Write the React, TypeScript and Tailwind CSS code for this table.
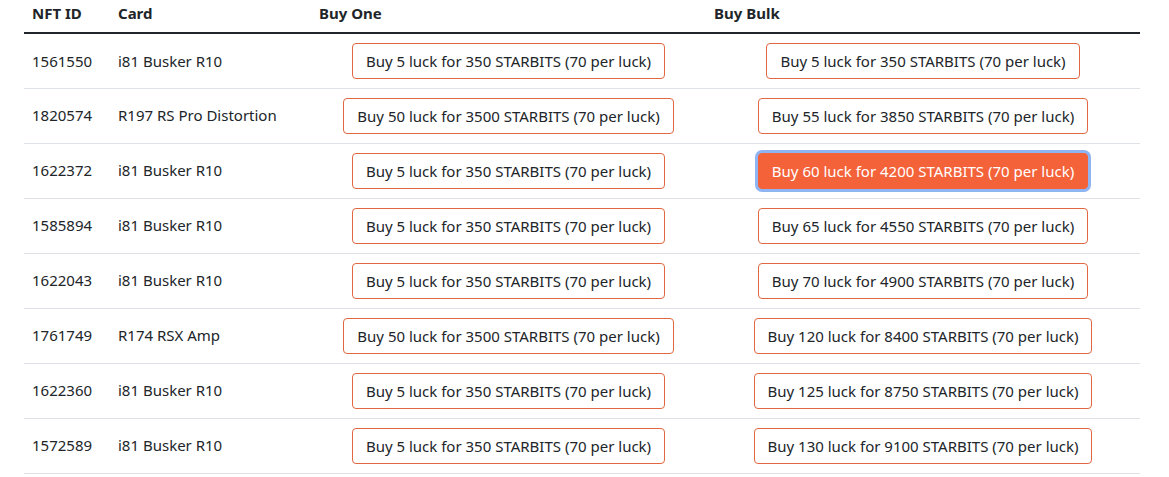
import React from "react";

const rows = [
  { id: "1561550", card: "i81 Busker R10", one: [5, 350], bulk: [5, 350] },
  { id: "1820574", card: "R197 RS Pro Distortion", one: [50, 3500], bulk: [55, 3850] },
  { id: "1622372", card: "i81 Busker R10", one: [5, 350], bulk: [60, 4200], active: true },
  { id: "1585894", card: "i81 Busker R10", one: [5, 350], bulk: [65, 4550] },
  { id: "1622043", card: "i81 Busker R10", one: [5, 350], bulk: [70, 4900] },
  { id: "1761749", card: "R174 RSX Amp", one: [50, 3500], bulk: [120, 8400] },
  { id: "1622360", card: "i81 Busker R10", one: [5, 350], bulk: [125, 8750] },
  { id: "1572589", card: "i81 Busker R10", one: [5, 350], bulk: [130, 9100] },
];

function Btn({ n, p, active }: { n: number; p: number; active?: boolean }) {
  return (
    <button
      className={
        active
          ? "h-[36px] px-[13px] rounded-[4px] border border-[#f4623a] bg-[#f4623a] text-white text-[15px] leading-6 ring-[3px] ring-[#8fb4f2] whitespace-nowrap"
          : "h-[36px] px-[13px] rounded-[4px] border border-[#e0673f] bg-white text-[#212529] text-[15px] leading-6 whitespace-nowrap"
      }
    >
      Buy {n} luck for {p} STARBITS (70 per luck)
    </button>
  );
}

export default function App() {
  return (
    <div className="bg-white w-[1169px] h-[477px] px-[24px] text-[#212529] text-[15px]" style={{ fontFamily: '"Noto Sans", "Open Sans", sans-serif' }}>
      <table className="w-[1116px] border-collapse table-fixed">
        <colgroup>
          <col className="w-[86px]" />
          <col className="w-[201px]" />
          <col className="w-[395px]" />
          <col className="w-[434px]" />
        </colgroup>
        <thead>
          <tr className="border-b-2 border-[#212529]">
            <th className="text-left font-bold px-2 pt-0 pb-[6px] h-[33px] align-middle leading-6">NFT ID</th>
            <th className="text-left font-bold px-2 pt-0 pb-[6px] align-middle leading-6">Card</th>
            <th className="text-left font-bold px-2 pt-0 pb-[6px] align-middle leading-6">Buy One</th>
            <th className="text-left font-bold px-2 pt-0 pb-[6px] align-middle leading-6">Buy Bulk</th>
          </tr>
        </thead>
        <tbody>
          {rows.map((r) => (
            <tr key={r.id + r.bulk[0]} className="border-b border-[#dee2e6] h-[55px]">
              <td className="px-2 align-middle">{r.id}</td>
              <td className="px-2 align-middle whitespace-nowrap">{r.card}</td>
              <td className="px-2 align-middle text-center">
                <Btn n={r.one[0]} p={r.one[1]} />
              </td>
              <td className="px-2 align-middle text-center">
                <Btn n={r.bulk[0]} p={r.bulk[1]} active={r.active} />
              </td>
            </tr>
          ))}
        </tbody>
      </table>
    </div>
  );
}
